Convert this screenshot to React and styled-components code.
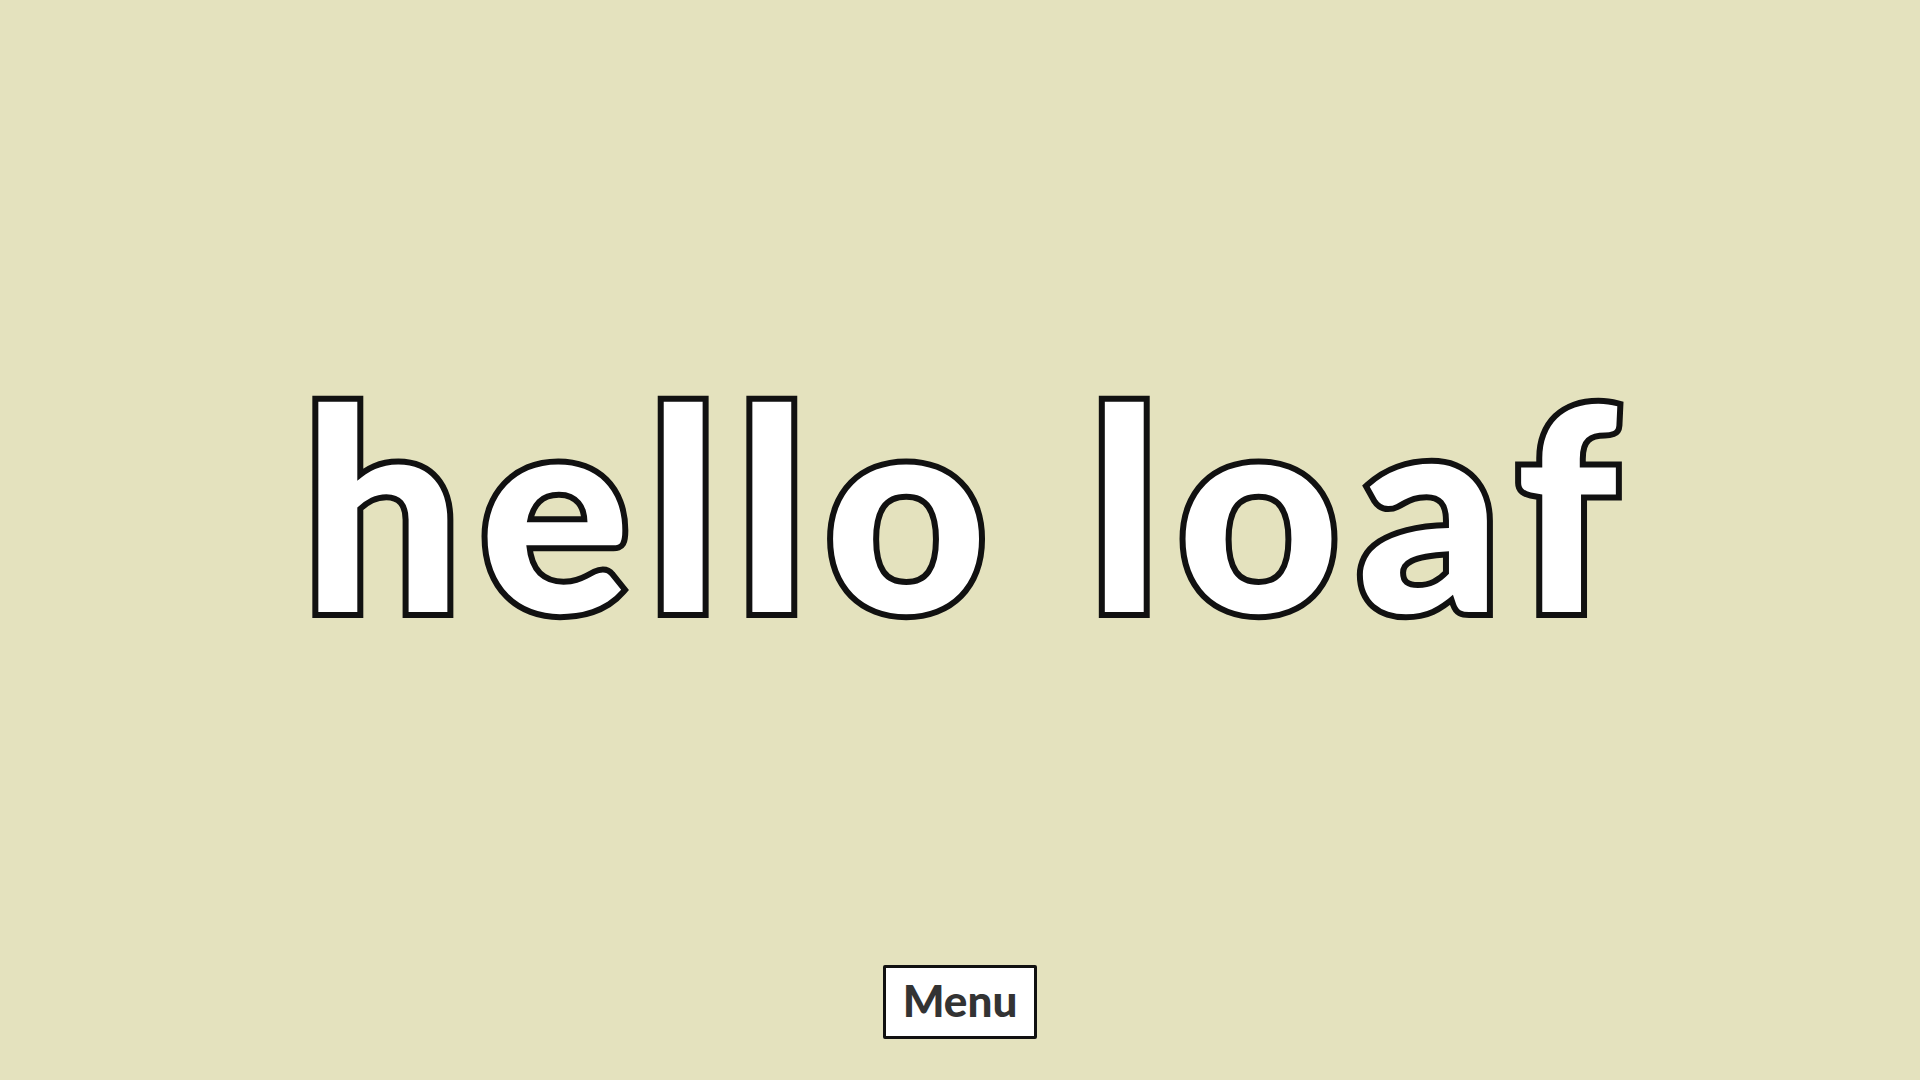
import styled, { createGlobalStyle } from "styled-components";

const GlobalStyle = createGlobalStyle`
  html, body, #root {
    margin: 0;
    height: 100%;
  }
  body {
    background: #e4e2be;
    font-family: Lato, "Noto Sans", sans-serif;
  }
`;

const Page = styled.main`
  height: 100vh;
  display: flex;
  flex-direction: column;
  align-items: center;
  overflow: hidden;
`;

const Stage = styled.section`
  flex: 1;
  display: flex;
  align-items: center;
  justify-content: center;
  padding-top: 41px;
  padding-left: 17px;
`;

const Title = styled.h1`
  margin: 0;
  font-family: Lato, "Noto Sans", sans-serif;
  font-weight: 900;
  font-size: 282px;
  line-height: 1;
  letter-spacing: 17px;
  color: #fff;
  -webkit-text-stroke: 12px #111;
  paint-order: stroke fill;
`;

const Footer = styled.footer`
  padding-bottom: 41px;
`;

const MenuButton = styled.button`
  width: 154px;
  height: 74px;
  box-sizing: border-box;
  border: 3px solid #111;
  border-radius: 2px;
  background: #fff;
  color: #333;
  font-family: Lato, "Noto Sans", sans-serif;
  font-weight: 900;
  font-size: 44px;
  padding: 0 0 4px;
  cursor: pointer;
`;

const App = () => {
  return (
    <>
      <GlobalStyle />
      <Page>
        <Stage>
          <Title>hello loaf</Title>
        </Stage>
        <Footer>
          <MenuButton>Menu</MenuButton>
        </Footer>
      </Page>
    </>
  );
};

export default App;
